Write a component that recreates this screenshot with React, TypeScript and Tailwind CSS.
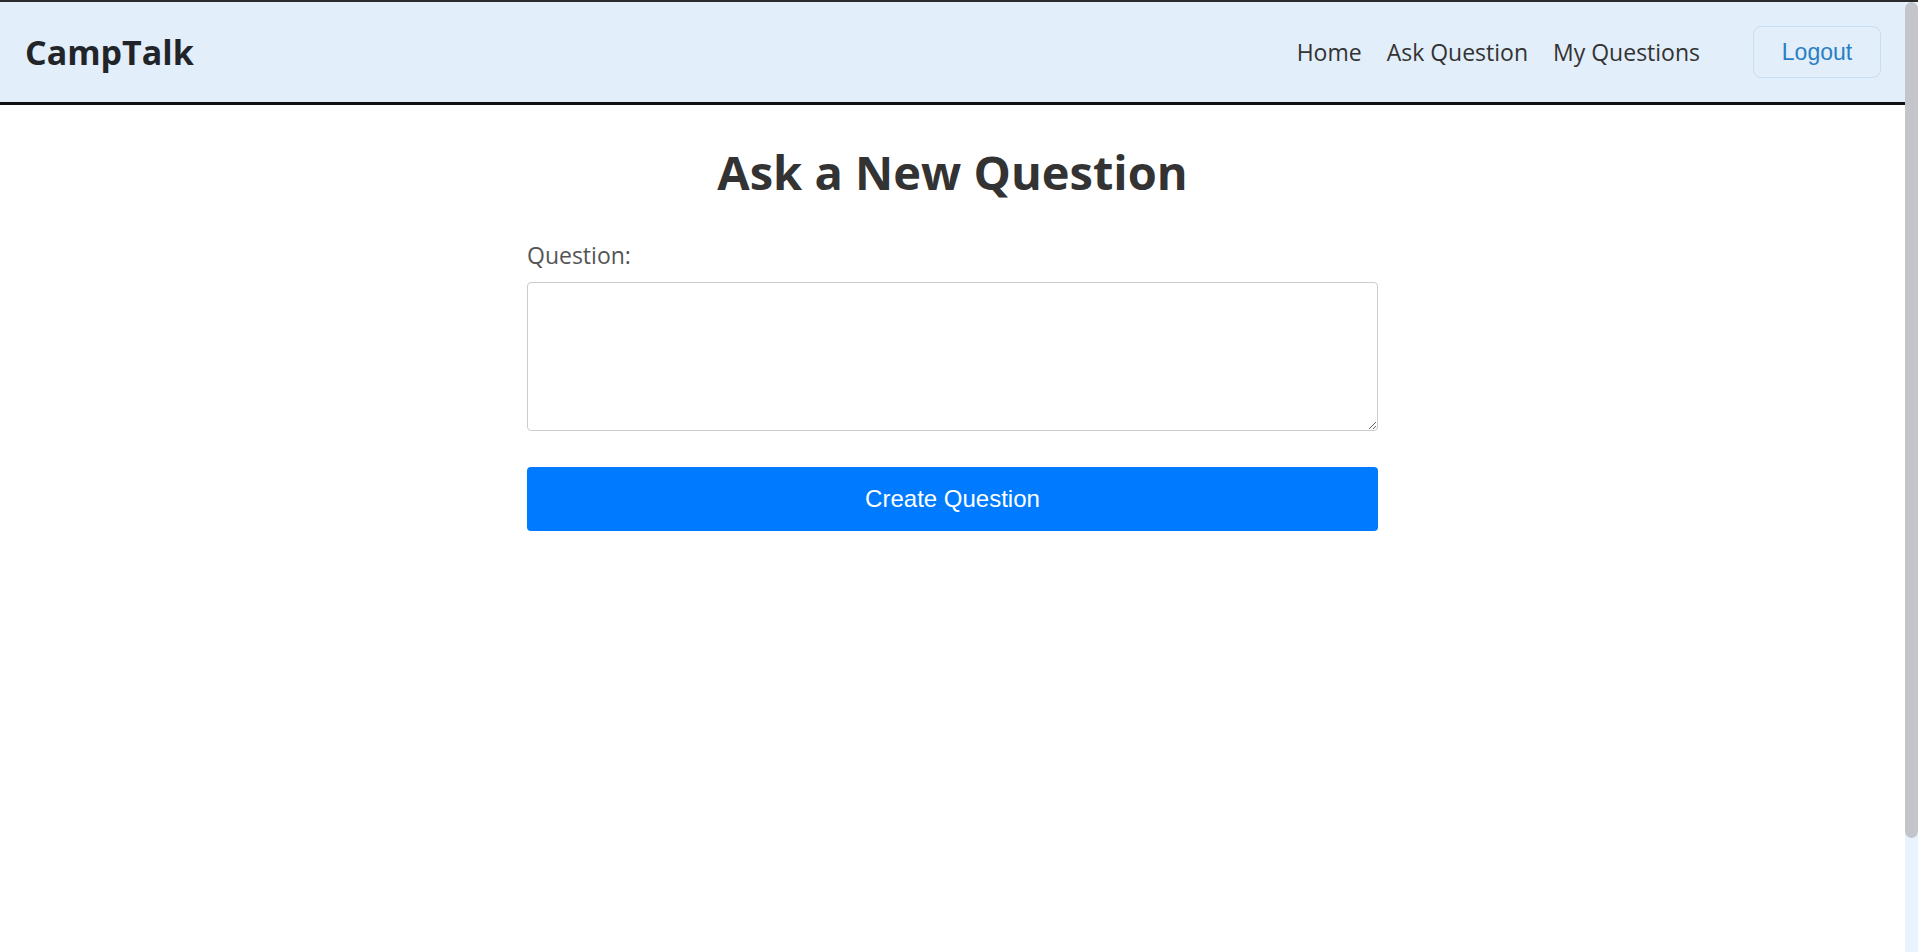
import React from "react";

export default function App() {
  return (
    <div className="h-screen flex flex-col bg-white overflow-hidden">
      <div className="h-[2px] shrink-0 bg-[#2b2b2b]" />
      <div className="flex-1 flex min-h-0">
        <div className="flex-1 min-w-0 bg-white font-['Open_Sans',sans-serif]">
          <header className="h-[103px] border-b-[3px] border-[#111111] bg-[#e2eef9] flex items-center pl-[25px] pr-[24px]">
            <div className="text-[34px] font-bold text-[#212529] leading-none">CampTalk</div>
            <nav className="ml-auto flex items-center gap-[25px] text-[23px] text-[#333333]">
              <a className="cursor-pointer">Home</a>
              <a className="cursor-pointer">Ask Question</a>
              <a className="cursor-pointer">My Questions</a>
            </nav>
            <button className="ml-[53px] w-[128px] h-[52px] rounded-[8px] border border-[#c7dff4] bg-[#e2eef9] text-[#2a7fc4] text-[23px] font-['Liberation_Sans',Arial,sans-serif]">
              Logout
            </button>
          </header>
          <main className="flex flex-col items-center">
            <h1 className="mt-[39px] text-[47px] leading-[56px] font-bold text-[#333333]">
              Ask a New Question
            </h1>
            <form className="mt-[40px] w-[851px] flex flex-col" onSubmit={(e) => e.preventDefault()}>
              <label className="text-[23px] leading-[30px] text-[#555555]">Question:</label>
              <textarea className="mt-[12px] h-[149px] w-full rounded-[4px] border border-[#cccccc] p-2 outline-none" />
              <button className="mt-[36px] h-[64px] w-full rounded-[4px] bg-[#007bff] text-white text-[24px] font-['Liberation_Sans',Arial,sans-serif]">
                Create Question
              </button>
            </form>
          </main>
        </div>
        <div className="w-[13px] shrink-0 bg-[#e8f3fd] flex flex-col" aria-hidden="true">
          <div className="h-[836px] w-full rounded-full bg-[#c4c5ca]" />
        </div>
      </div>
    </div>
  );
}
